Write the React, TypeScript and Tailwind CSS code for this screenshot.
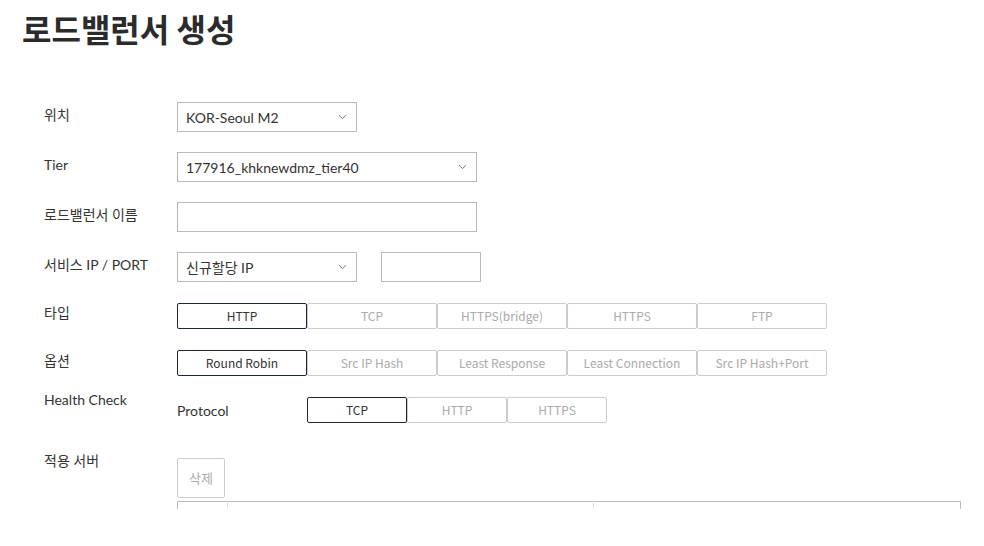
import React from "react";

const FONT = { fontFamily: "Lato, 'Noto Sans CJK KR', sans-serif" };
const BTN_FONT = { fontFamily: "'Noto Sans CJK KR', sans-serif" };

function Chevron() {
  return (
    <svg width="9" height="6" viewBox="0 0 9 6" className="text-[#777]">
      <path d="M1 1.2 L4.5 4.6 L8 1.2" fill="none" stroke="currentColor" strokeWidth="1" />
    </svg>
  );
}

function Select({ value, width }: { value: string; width: string }) {
  return (
    <div
      className={`${width} h-[30px] border border-[#b9b9b9] bg-white flex items-center justify-between pl-[8px] pr-[9px] text-[14px] text-[#333]`}
    >
      <span>{value}</span>
      <Chevron />
    </div>
  );
}

function Segmented({ items, width }: { items: string[]; width: string }) {
  return (
    <div className="flex" style={BTN_FONT}>
      {items.map((item, i) => (
        <div
          key={item}
          className={`${width} h-[26px] flex items-center justify-center text-[12px] rounded-[2px] border ${
            i === 0 ? "border-[#1e2636] text-[#333]" : "border-[#cccccc] text-[#aaaaaa]"
          }`}
        >
          {item}
        </div>
      ))}
    </div>
  );
}

function Row({ label, children, className = "", labelClass = "" }: { label: string; children: React.ReactNode; className?: string; labelClass?: string }) {
  return (
    <div className={`flex items-start ${className}`}>
      <div className={`w-[133px] shrink-0 text-[14px] leading-[20px] text-[#333] ${labelClass}`}>{label}</div>
      {children}
    </div>
  );
}

export default function App() {
  return (
    <div className="w-[984px] h-[546px] bg-white overflow-hidden" style={FONT}>
      <h1
        className="pl-[22px] pt-[6px] text-[32px] leading-[44px] font-bold text-[#2b2b2b]"
        style={{ fontFamily: "'Noto Sans CJK KR', sans-serif" }}
      >
        로드밸런서 생성
      </h1>

      <div className="pl-[44px] pt-[52px]">
        <Row label="위치" labelClass="pt-[3px]">
          <Select value="KOR-Seoul M2" width="w-[180px]" />
        </Row>
        <Row label="Tier" labelClass="pt-[3px]" className="mt-[20px]">
          <Select value="177916_khknewdmz_tier40" width="w-[300px]" />
        </Row>
        <Row label="로드밸런서 이름" labelClass="pt-[3px]" className="mt-[20px]">
          <div className="w-[300px] h-[30px] border border-[#b9b9b9]" />
        </Row>
        <Row label="서비스 IP / PORT" labelClass="pt-[3px]" className="mt-[20px]">
          <div className="flex gap-[24px]">
            <Select value="신규할당 IP" width="w-[180px]" />
            <div className="w-[100px] h-[30px] border border-[#b9b9b9]" />
          </div>
        </Row>
        <Row label="타입" className="mt-[21px]">
          <Segmented items={["HTTP", "TCP", "HTTPS(bridge)", "HTTPS", "FTP"]} width="w-[130px]" />
        </Row>
        <Row label="옵션" className="mt-[21px]" labelClass="pt-[1px]">
          <Segmented
            items={["Round Robin", "Src IP Hash", "Least Response", "Least Connection", "Src IP Hash+Port"]}
            width="w-[130px]"
          />
        </Row>
        <Row label="Health Check" className="mt-[14px]">
          <div className="flex items-center mt-[7px]">
            <div className="w-[130px] text-[14px] text-[#333]">Protocol</div>
            <Segmented items={["TCP", "HTTP", "HTTPS"]} width="w-[100px]" />
          </div>
        </Row>
        <Row label="적용 서버" className="mt-[28px]">
          <div className="mt-[7px] w-[784px]">
            <div
              className="w-[48px] h-[40px] border border-[#cccccc] rounded-[2px] flex items-center justify-center text-[13px] text-[#aaaaaa]"
              style={BTN_FONT}
            >
              삭제
            </div>
            <div className="mt-[3px] h-[8px] flex border-t border-l border-r border-[#bdbdbd]">
              <div className="w-[50px] border-r border-[#dddddd] my-[1px]" />
              <div className="w-[366px] border-r border-[#dddddd] my-[1px]" />
              <div className="flex-1" />
            </div>
          </div>
        </Row>
      </div>
    </div>
  );
}
